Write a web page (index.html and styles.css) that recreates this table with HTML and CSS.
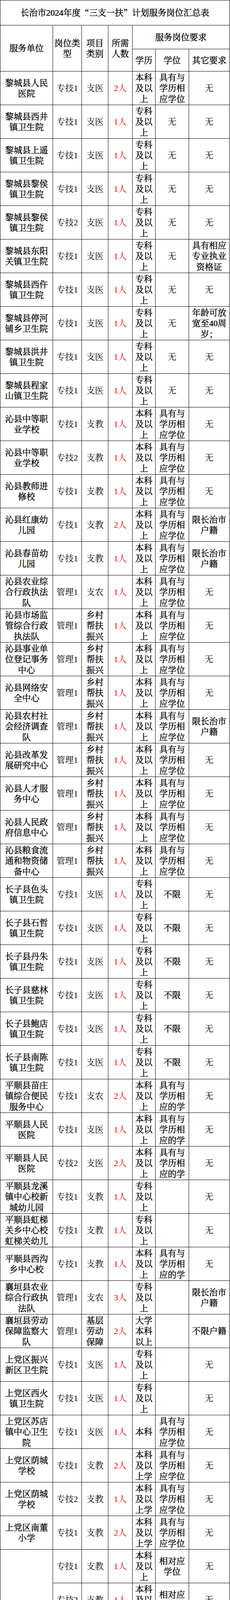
FILE: index.html
```html
<!DOCTYPE html>
<html lang="zh-CN">
<head>
<meta charset="utf-8">
<title>长治市2024年度“三支一扶”计划服务岗位汇总表</title>
<link rel="stylesheet" href="styles.css">
</head>
<body>
<div class="sheet">
  <div class="c title">长治市2024年度<span class="q">“</span>三支一扶<span class="q">”</span>计划服务岗位汇总表</div>

  <div class="c head hs2">服务单位</div>
  <div class="c head hs2">岗位类型</div>
  <div class="c head hs2">项目类别</div>
  <div class="c head hs2">所需人数</div>
  <div class="c head cs3">服务岗位要求</div>
  <div class="c head">学历</div>
  <div class="c head">学位</div>
  <div class="c head">其它要求</div>

  <div class="c unit">黎城县人民医院</div><div class="c post">专技1</div><div class="c kind">支医</div><div class="c num">2人</div><div class="c edu">本科及以上</div><div class="c deg">具有与学历相应学位</div><div class="c none">无</div>
  <div class="c unit">黎城县西井镇卫生院</div><div class="c post">专技1</div><div class="c kind">支医</div><div class="c num">1人</div><div class="c edu">专科及以上</div><div class="c none">无</div><div class="c none">无</div>
  <div class="c unit">黎城县上遥镇卫生院</div><div class="c post">专技1</div><div class="c kind">支医</div><div class="c num">1人</div><div class="c edu">专科及以上</div><div class="c none">无</div><div class="c none">无</div>
  <div class="c unit">黎城县黎侯镇卫生院</div><div class="c post">专技1</div><div class="c kind">支医</div><div class="c num">1人</div><div class="c edu">专科及以上</div><div class="c none">无</div><div class="c none">无</div>
  <div class="c unit">黎城县黎侯镇卫生院</div><div class="c post">专技2</div><div class="c kind">支医</div><div class="c num">1人</div><div class="c edu">专科及以上</div><div class="c none">无</div><div class="c none">无</div>
  <div class="c unit">黎城县东阳关镇卫生院</div><div class="c post">专技1</div><div class="c kind">支医</div><div class="c num">1人</div><div class="c edu">专科及以上</div><div class="c none">无</div><div class="c req">具有相应专业执业资格证</div>
  <div class="c unit">黎城县西仵镇卫生院</div><div class="c post">专技1</div><div class="c kind">支医</div><div class="c num">1人</div><div class="c edu">专科及以上</div><div class="c none">无</div><div class="c none">无</div>
  <div class="c unit">黎城县停河铺乡卫生院</div><div class="c post">专技1</div><div class="c kind">支医</div><div class="c num">1人</div><div class="c edu">专科及以上</div><div class="c none">无</div><div class="c req">年龄可放宽至40周岁；</div>
  <div class="c unit">黎城县洪井镇卫生院</div><div class="c post">专技1</div><div class="c kind">支医</div><div class="c num">1人</div><div class="c edu">专科及以上</div><div class="c none">无</div><div class="c none">无</div>
  <div class="c unit">黎城县程家山镇卫生院</div><div class="c post">专技1</div><div class="c kind">支医</div><div class="c num">1人</div><div class="c edu">专科及以上</div><div class="c none">无</div><div class="c none">无</div>

  <div class="c unit">沁县中等职业学校</div><div class="c post">专技1</div><div class="c kind">支教</div><div class="c num">1人</div><div class="c edu">本科及以上</div><div class="c deg">具有与学历相应学位</div><div class="c none">无</div>
  <div class="c unit">沁县中等职业学校</div><div class="c post">专技2</div><div class="c kind">支教</div><div class="c num">1人</div><div class="c edu">本科及以上</div><div class="c deg">具有与学历相应学位</div><div class="c none">无</div>
  <div class="c unit">沁县教师进修校</div><div class="c post">专技1</div><div class="c kind">支教</div><div class="c num">1人</div><div class="c edu">本科及以上</div><div class="c deg">具有与学历相应学位</div><div class="c none">无</div>
  <div class="c unit">沁县红康幼儿园</div><div class="c post">专技1</div><div class="c kind">支教</div><div class="c num">2人</div><div class="c edu">本科及以上</div><div class="c deg">具有与学历相应学位</div><div class="c req">限长治市户籍</div>
  <div class="c unit">沁县春苗幼儿园</div><div class="c post">专技1</div><div class="c kind">支教</div><div class="c num">1人</div><div class="c edu">本科及以上</div><div class="c deg">具有与学历相应学位</div><div class="c req">限长治市户籍</div>
  <div class="c unit">沁县农业综合行政执法队</div><div class="c post">管理1</div><div class="c kind">支农</div><div class="c num">1人</div><div class="c edu">本科及以上</div><div class="c deg">具有与学历相应学位</div><div class="c none">无</div>
  <div class="c unit">沁县市场监管综合行政执法队</div><div class="c post">管理1</div><div class="c kind long">乡村帮扶振兴</div><div class="c num">1人</div><div class="c edu">本科及以上</div><div class="c deg">具有与学历相应学位</div><div class="c none">无</div>
  <div class="c unit">沁县事业单位登记事务中心</div><div class="c post">管理1</div><div class="c kind long">乡村帮扶振兴</div><div class="c num">1人</div><div class="c edu">本科及以上</div><div class="c deg">具有与学历相应学位</div><div class="c none">无</div>
  <div class="c unit">沁县网络安全中心</div><div class="c post">管理1</div><div class="c kind long">乡村帮扶振兴</div><div class="c num">1人</div><div class="c edu">本科及以上</div><div class="c deg">具有与学历相应学位</div><div class="c none">无</div>
  <div class="c unit">沁县农村社会经济调查队</div><div class="c post">管理1</div><div class="c kind long">乡村帮扶振兴</div><div class="c num">1人</div><div class="c edu">本科及以上</div><div class="c deg">具有与学历相应学位</div><div class="c req">限长治市户籍</div>
  <div class="c unit">沁县改革发展研究中心</div><div class="c post">管理1</div><div class="c kind long">乡村帮扶振兴</div><div class="c num">1人</div><div class="c edu">本科及以上</div><div class="c deg">具有与学历相应学位</div><div class="c none">无</div>
  <div class="c unit">沁县人才服务中心</div><div class="c post">管理1</div><div class="c kind long">乡村帮扶振兴</div><div class="c num">1人</div><div class="c edu">本科及以上</div><div class="c deg">具有与学历相应学位</div><div class="c none">无</div>
  <div class="c unit">沁县人民政府信息中心</div><div class="c post">管理1</div><div class="c kind long">乡村帮扶振兴</div><div class="c num">1人</div><div class="c edu">本科及以上</div><div class="c deg">具有与学历相应学位</div><div class="c none">无</div>
  <div class="c unit">沁县粮食流通和物资储备中心</div><div class="c post">管理1</div><div class="c kind long">乡村帮扶振兴</div><div class="c num">1人</div><div class="c edu">本科及以上</div><div class="c deg">具有与学历相应学位</div><div class="c none">无</div>

  <div class="c unit">长子县色头镇卫生院</div><div class="c post">专技1</div><div class="c kind">支医</div><div class="c num">1人</div><div class="c edu">专科及以上</div><div class="c deg">不限</div><div class="c none">无</div>
  <div class="c unit">长子县石哲镇卫生院</div><div class="c post">专技1</div><div class="c kind">支医</div><div class="c num">1人</div><div class="c edu">专科及以上</div><div class="c deg">不限</div><div class="c none">无</div>
  <div class="c unit">长子县丹朱镇卫生院</div><div class="c post">专技1</div><div class="c kind">支医</div><div class="c num">1人</div><div class="c edu">专科及以上</div><div class="c deg">不限</div><div class="c none">无</div>
  <div class="c unit">长子县慈林镇卫生院</div><div class="c post">专技1</div><div class="c kind">支医</div><div class="c num">1人</div><div class="c edu">专科及以上</div><div class="c deg">不限</div><div class="c none">无</div>
  <div class="c unit">长子县鲍店镇卫生院</div><div class="c post">专技1</div><div class="c kind">支医</div><div class="c num">1人</div><div class="c edu">专科及以上</div><div class="c deg">不限</div><div class="c none">无</div>
  <div class="c unit">长子县南陈镇卫生院</div><div class="c post">专技1</div><div class="c kind">支医</div><div class="c num">1人</div><div class="c edu">专科及以上</div><div class="c deg">不限</div><div class="c none">无</div>

  <div class="c unit">平顺县苗庄镇综合便民服务中心</div><div class="c post">专技1</div><div class="c kind">支农</div><div class="c num">2人</div><div class="c edu">本科及以上</div><div class="c deg">具有与学历相应的学</div><div class="c none">无</div>
  <div class="c unit">平顺县人民医院</div><div class="c post">专技1</div><div class="c kind">支医</div><div class="c num">1人</div><div class="c edu">本科及以上</div><div class="c deg">具有与学历相应的学</div><div class="c none">无</div>
  <div class="c unit">平顺县人民医院</div><div class="c post">专技2</div><div class="c kind">支医</div><div class="c num">2人</div><div class="c edu">本科及以上</div><div class="c deg">具有与学历相应的学</div><div class="c none">无</div>
  <div class="c unit">平顺县龙溪镇中心校新城幼儿园</div><div class="c post">专技1</div><div class="c kind">支教</div><div class="c num">1人</div><div class="c edu">专科及以上</div><div class="c deg"></div><div class="c none">无</div>
  <div class="c unit">平顺县虹梯关乡中心校虹梯关幼儿</div><div class="c post">专技1</div><div class="c kind">支教</div><div class="c num">1人</div><div class="c edu">专科及以上</div><div class="c deg"></div><div class="c none">无</div>
  <div class="c unit">平顺县西沟乡中心校</div><div class="c post">专技1</div><div class="c kind">支教</div><div class="c num">1人</div><div class="c edu">本科及以上</div><div class="c deg">具有与学历相应的学</div><div class="c none">无</div>

  <div class="c unit">襄垣县农业综合行政执法队</div><div class="c post">管理1</div><div class="c kind">支农</div><div class="c num">3人</div><div class="c edu">专科及以上</div><div class="c deg"></div><div class="c req">限长治市户籍</div>
  <div class="c unit">襄垣县劳动保障监察大队</div><div class="c post">管理1</div><div class="c kind long">基层劳动保障</div><div class="c num">2人</div><div class="c edu">大学本科以上</div><div class="c deg"></div><div class="c req">不限户籍</div>

  <div class="c unit">上党区振兴新区卫生院</div><div class="c post">专技1</div><div class="c kind">支医</div><div class="c num">1人</div><div class="c edu">专科及以上</div><div class="c deg"></div><div class="c none">无</div>
  <div class="c unit">上党区西火镇卫生院</div><div class="c post">专技1</div><div class="c kind">支医</div><div class="c num">1人</div><div class="c edu">专科及以上</div><div class="c deg"></div><div class="c none">无</div>
  <div class="c unit">上党区苏店镇中心卫生院</div><div class="c post">专技1</div><div class="c kind">支医</div><div class="c num">1人</div><div class="c edu">本科</div><div class="c deg">具有与学历相应学位</div><div class="c none">无</div>
  <div class="c unit">上党区荫城学校</div><div class="c post">专技1</div><div class="c kind">支教</div><div class="c num">2人</div><div class="c edu">本科及以上学</div><div class="c deg">具有与学历相应学位</div><div class="c none">无</div>
  <div class="c unit">上党区荫城学校</div><div class="c post">专技2</div><div class="c kind">支教</div><div class="c num">1人</div><div class="c edu">本科及以上学</div><div class="c deg">具有与学历相应学位</div><div class="c none">无</div>
  <div class="c unit">上党区南董小学</div><div class="c post">专技1</div><div class="c kind">支教</div><div class="c num">2人</div><div class="c edu">本科及以上学</div><div class="c deg">具有与学历相应学位</div><div class="c none">无</div>

  <div class="c unit rs5">长治市潞州区紫坊小学校</div><div class="c post">专技1</div><div class="c kind">支教</div><div class="c num">1人</div><div class="c edu">本科及以上</div><div class="c deg">相对应学位</div><div class="c none">无</div>
  <div class="c post">专技2</div><div class="c kind">支教</div><div class="c num">1人</div><div class="c edu">本科及以上</div><div class="c deg">相对应学位</div><div class="c none">无</div>
  <div class="c post">专技3</div><div class="c kind">支教</div><div class="c num">1人</div><div class="c edu">本科及以上</div><div class="c deg">相对应学位</div><div class="c none">无</div>
  <div class="c post">专技4</div><div class="c kind">支教</div><div class="c num">1人</div><div class="c edu">本科及以上</div><div class="c deg">相对应学位</div><div class="c none">无</div>
  <div class="c post">专技5</div><div class="c kind">支教</div><div class="c num">1人</div><div class="c edu">本科及以上</div><div class="c deg">相对应学位</div><div class="c none">无</div>

  <div class="c unit">长治市潞州区老顶山街道联合学区</div><div class="c post">专技1</div><div class="c kind">支教</div><div class="c num">1人</div><div class="c edu">本科及以上</div><div class="c deg">相对应学位</div><div class="c none">无</div>

  <div class="c unit rs4">长治市潞州区太行东街小学校</div><div class="c post">专技1</div><div class="c kind">支教</div><div class="c num">1人</div><div class="c edu">本科及以上</div><div class="c deg">相对应学位</div><div class="c none">无</div>
  <div class="c post">专技2</div><div class="c kind">支教</div><div class="c num">1人</div><div class="c edu">本科及以上</div><div class="c deg">相对应学位</div><div class="c none">无</div>
  <div class="c post">专技3</div><div class="c kind">支教</div><div class="c num">1人</div><div class="c edu">本科及以上</div><div class="c deg">相对应学位</div><div class="c none">无</div>
  <div class="c post">专技4</div><div class="c kind">支教</div><div class="c num">1人</div><div class="c edu">本科及以上</div><div class="c deg">相对应学位</div><div class="c none">无</div>

  <div class="c unit rs2">长治市潞州区英雄北路小学校</div><div class="c post">专技1</div><div class="c kind">支教</div><div class="c num">1人</div><div class="c edu">本科及以上</div><div class="c deg">相对应学位</div><div class="c none">无</div>
  <div class="c post">专技2</div><div class="c kind">支教</div><div class="c num">1人</div><div class="c edu">本科及以上</div><div class="c deg">相对应学位</div><div class="c none">无</div>

  <div class="c unit rs4">长治市潞州区华丰路小学校</div><div class="c post">专技1</div><div class="c kind">支教</div><div class="c num">1人</div><div class="c edu">本科及以上</div><div class="c deg">相对应学位</div><div class="c none">无</div>
  <div class="c post">专技2</div><div class="c kind">支教</div><div class="c num">1人</div><div class="c edu">本科及以上</div><div class="c deg">相对应学位</div><div class="c none">无</div>
  <div class="c post">专技3</div><div class="c kind">支教</div><div class="c num">1人</div><div class="c edu">本科及以上</div><div class="c deg">相对应学位</div><div class="c none">无</div>
  <div class="c post">专技4</div><div class="c kind">支教</div><div class="c num">1人</div><div class="c edu">本科及以上</div><div class="c deg">相对应学位</div><div class="c none">无</div>

  <div class="c unit rs4">长治市潞州区长子门小学校</div><div class="c post">专技1</div><div class="c kind">支教</div><div class="c num">1人</div><div class="c edu">本科及以上</div><div class="c deg">相对应学位</div><div class="c none">无</div>
  <div class="c post">专技2</div><div class="c kind">支教</div><div class="c num">1人</div><div class="c edu">本科及以上</div><div class="c deg">相对应学位</div><div class="c none">无</div>
  <div class="c post">专技3</div><div class="c kind">支教</div><div class="c num">1人</div><div class="c edu">本科及以上</div><div class="c deg">相对应学位</div><div class="c none">无</div>
  <div class="c post">专技4</div><div class="c kind">支教</div><div class="c num">1人</div><div class="c edu">本科及以上</div><div class="c deg">相对应学位</div><div class="c none">无</div>

  <div class="c unit">长治市潞州区长钢小学校</div><div class="c post">专技1</div><div class="c kind">支教</div><div class="c num">1人</div><div class="c edu">本科及以上</div><div class="c deg">相对应学位</div><div class="c none">无</div>

  <div class="c unit rs2">长治市潞州区澳瑞特小学校</div><div class="c post">专技1</div><div class="c kind">支教</div><div class="c num">1人</div><div class="c edu">本科及以上</div><div class="c deg">相对应学位</div><div class="c none">无</div>
  <div class="c post">专技2</div><div class="c kind">支教</div><div class="c num">2人</div><div class="c edu">本科及以上</div><div class="c deg">相对应学位</div><div class="c none">无</div>

  <div class="c unit rs3">长治市潞州区站前路小学校</div><div class="c post">专技1</div><div class="c kind">支教</div><div class="c num">1人</div><div class="c edu">本科及以上</div><div class="c deg">相对应学位</div><div class="c none">无</div>
  <div class="c post">专技2</div><div class="c kind">支教</div><div class="c num">1人</div><div class="c edu">本科及以上</div><div class="c deg">相对应学位</div><div class="c none">无</div>
  <div class="c post">专技3</div><div class="c kind">支教</div><div class="c num">1人</div><div class="c edu">本科及以上</div><div class="c deg">相对应学位</div><div class="c none">无</div>

  <div class="c unit">长治市潞州区堠北庄街道联合学区</div><div class="c post">专技1</div><div class="c kind">支教</div><div class="c num">1人</div><div class="c edu">本科及以上</div><div class="c deg">相对应学位</div><div class="c none">无</div>
  <div class="c unit">长治市潞州区北石槽小学校</div><div class="c post">专技1</div><div class="c kind">支教</div><div class="c num">1人</div><div class="c edu">本科及以上</div><div class="c deg">相对应学位</div><div class="c none">无</div>

  <div class="c unit rs2">长治市潞州区南石槽小学校</div><div class="c post">专技1</div><div class="c kind">支教</div><div class="c num">1人</div><div class="c edu">本科及以上</div><div class="c deg">相对应学位</div><div class="c none">无</div>
  <div class="c post">专技2</div><div class="c kind">支教</div><div class="c num">1人</div><div class="c edu">本科及以上</div><div class="c deg">相对应学位</div><div class="c none">无</div>

  <div class="c unit">长治市潞州区史家庄学校</div><div class="c post">专技1</div><div class="c kind">支教</div><div class="c num">1人</div><div class="c edu">本科及以上</div><div class="c deg">相对应学位</div><div class="c none">无</div>

  <div class="c unit"></div><div class="c post"></div><div class="c kind"></div><div class="c num">85人</div><div class="c edu"></div><div class="c deg"></div><div class="c req"></div>
</div>
</body>
</html>
```

FILE: styles.css
```css
* {
  box-sizing: border-box;
}

html,
body {
  margin: 0;
  padding: 0;
  background: #ffffff;
}

body {
  font-family: "Liberation Serif", "Noto Serif CJK SC", "Source Han Serif SC", "AR PL UMing CN", "Noto Sans CJK SC", serif;
  color: #000000;
}

.sheet {
  display: grid;
  grid-template-columns: 135px 74px 68px 62px 59px 86px 104px;
  grid-template-rows: 64px 61px 57px;
  grid-auto-rows: 86px;
  width: 589px;
  border-left: 1px solid #000000;
  border-top: 1px solid #000000;
}

.c {
  display: flex;
  align-items: center;
  justify-content: center;
  min-width: 0;
  text-align: center;
  padding: 1px 2px 0;
  border-right: 1px solid #000000;
  border-bottom: 1px solid #000000;
  font-size: 22px;
  line-height: 27.5px;
  -webkit-text-stroke: 0.45px #000000;
}

.post,
.kind,
.none {
  -webkit-text-stroke: 0;
}

.kind.long {
  -webkit-text-stroke: 0.45px #000000;
}

.num {
  color: #ff0000;
  -webkit-text-stroke: 0;
}

.title {
  grid-column: 1 / -1;
}

.q {
  font-family: "Noto Serif CJK SC", "Source Han Serif SC", "Noto Sans CJK SC", sans-serif;
  font-feature-settings: "fwid" 1;
}

.hs2 {
  grid-row: span 2;
}

.cs3 {
  grid-column: span 3;
}

.rs2 {
  grid-row: span 2;
}

.rs3 {
  grid-row: span 3;
}

.rs4 {
  grid-row: span 4;
}

.rs5 {
  grid-row: span 5;
}
```
